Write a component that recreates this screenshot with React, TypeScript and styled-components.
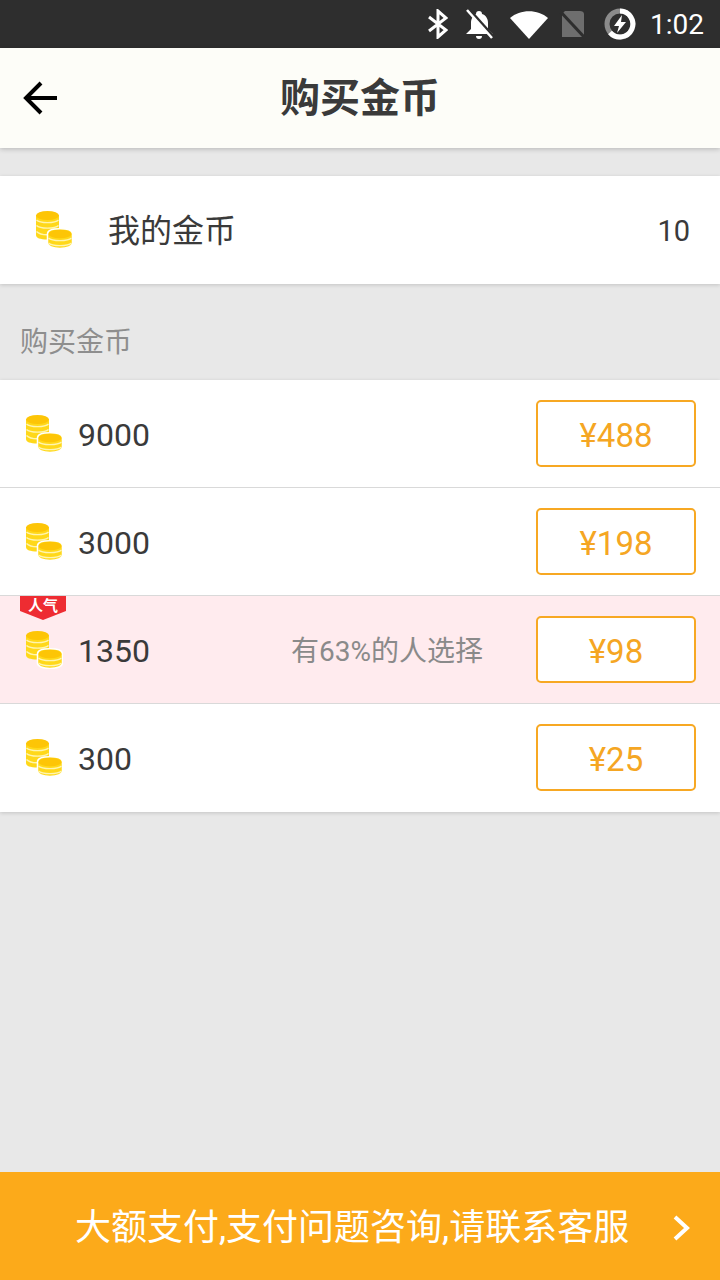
import React from 'react'
import styled, {createGlobalStyle} from 'styled-components'

const GlobalStyle = createGlobalStyle`
  html, body {
    margin: 0;
    padding: 0;
    background: #e8e8e8;
  }
  * {
    box-sizing: border-box;
  }
`

const Page = styled.main`
  width: 720px;
  height: 1280px;
  display: flex;
  flex-direction: column;
  overflow: hidden;
  background: #e8e8e8;
  font-family: Roboto, "Noto Sans CJK SC", sans-serif;
  color: #3a3a3a;
`

const StatusBar = styled.div`
  height: 48px;
  flex: none;
  background: #2e2e2e;
  color: #fff;
  display: flex;
  align-items: center;
  justify-content: flex-end;
  padding-right: 16px;
  font-size: 28px;
`

const StatusIcon = styled.svg<{$gap: number}>`
  display: block;
  margin-right: ${p => p.$gap}px;
`

const Header = styled.header`
  height: 100px;
  flex: none;
  background: #fdfdf8;
  box-shadow: 0 1px 5px rgba(0, 0, 0, 0.22);
  display: flex;
  align-items: center;
  justify-content: center;
  padding-bottom: 6px;
  position: relative;
`

const BackIcon = styled.svg`
  position: absolute;
  left: 23px;
  top: 33px;
`

const Title = styled.h1`
  margin: 0;
  font-size: 40px;
  font-weight: 700;
  color: #3a3a3a;
`

const Balance = styled.section`
  height: 108px;
  flex: none;
  margin-top: 28px;
  background: #fff;
  box-shadow: 0 1px 4px rgba(0, 0, 0, 0.16);
  display: flex;
  align-items: center;
  padding: 0 30px 0 35px;
`

const BalanceLabel = styled.span`
  font-size: 32px;
  margin-left: 35px;
  padding-bottom: 4px;
  flex: 1;
`

const BalanceValue = styled.span`
  font-size: 29px;
  padding-top: 2px;
`

const SectionLabel = styled.div`
  height: 96px;
  flex: none;
  display: flex;
  align-items: center;
  padding: 15px 0 0 20px;
  font-size: 28px;
  color: #8e8e8e;
`

const List = styled.section`
  flex: none;
  background: #fff;
  box-shadow: 0 1px 4px rgba(0, 0, 0, 0.16);
`

const Row = styled.div<{$hot?: boolean}>`
  height: 108px;
  display: flex;
  align-items: center;
  padding: 0 24px 0 25px;
  position: relative;
  background: ${p => (p.$hot ? '#ffebee' : '#fff')};
  border-bottom: 1px solid #d9d9d9;

  &:last-child {
    border-bottom-color: transparent;
  }
`

const Amount = styled.span`
  font-size: 32px;
  margin-left: 15px;
  padding-top: 2px;
  flex: 1;
  color: #3a3a3a;
`

const Note = styled.span`
  font-size: 28px;
  color: #8a8a8a;
  margin-right: 53px;
  padding-bottom: 2px;
`

const PriceButton = styled.button`
  width: 160px;
  height: 67px;
  border: 2px solid #f7a823;
  border-radius: 5px;
  background: #fff;
  color: #f5a623;
  font-family: inherit;
  font-size: 33px;
  padding: 4px 0 0;
`

const Badge = styled.div`
  position: absolute;
  left: 20px;
  top: 0;
  width: 46px;
  height: 24px;
  background: #ee2c32;
  clip-path: polygon(0 0, 100% 0, 100% 62%, 50% 100%, 0 62%);
  color: #fff;
  font-size: 15px;
  font-weight: 700;
  line-height: 21px;
  text-align: center;
`

const Spacer = styled.div`
  flex: 1;
`

const Footer = styled.footer`
  height: 108px;
  flex: none;
  background: #fcaa1a;
  color: #fff;
  display: flex;
  align-items: center;
  padding: 0 0 4px 75px;
  position: relative;
  font-size: 36px;
`

const Chevron = styled.svg`
  position: absolute;
  left: 672px;
  top: 42px;
`

const Coins = () => (
  <svg width="38" height="38" viewBox="0 0 38 38">
    <path fill="#ffd81a" d="M1 4 H24 V24 C24 27 20 28.500 12.500 28.500 C5 28.500 1 27 1 24 Z" />
    <ellipse cx="12.500" cy="4.500" rx="11.500" ry="4.500" fill="#fdc506" />
    <g fill="none" stroke="#fff5b0" strokeWidth="1.400">
      <path d="M1.500 9 C5 12.500 20 12.500 23.500 9" />
      <path d="M1.500 14.500 C5 18 20 18 23.500 14.500" />
      <path d="M1.500 20.500 C4 23 8 23.800 12 23.800" />
    </g>
    <path fill="#ffd81a" stroke="#fff" strokeWidth="1.500" d="M12.500 23 C12.500 19.500 18 17.800 25 17.800 C32 17.800 37.500 19.500 37.500 23 V32 C37.500 35.500 32 37.500 25 37.500 C18 37.500 12.500 35.500 12.500 32 Z" />
    <ellipse cx="25" cy="23" rx="11.500" ry="4.300" fill="#fdc506" />
    <g fill="none" stroke="#fff5b0" strokeWidth="1.400">
      <path d="M13.500 27 C17 30.500 33 30.500 36.500 27" />
      <path d="M13.500 32 C17 35.500 33 35.500 36.500 32" />
    </g>
  </svg>
)

const packages = [
  {amount: '9000', price: '¥488'},
  {amount: '3000', price: '¥198'},
  {amount: '1350', price: '¥98', hot: true, note: '有63%的人选择'},
  {amount: '300', price: '¥25'},
]

export default function App() {
  return (
    <Page>
      <GlobalStyle />
      <StatusBar>
        <StatusIcon $gap={16} width="22" height="30" viewBox="0 0 22 30" fill="none" stroke="#fff" strokeWidth="3">
          <path d="M3 8 L20 21 L12 28 V2 L20 9 L3 22" />
        </StatusIcon>
        <StatusIcon $gap={14} width="30" height="30" viewBox="0 0 30 30">
          <path fill="#fff" d="M15 2 C17 2 18 3 18 5 C22 6 24 10 24 14 V20 L29 25 H2 L7 20 V14 C7 10 9 6 12 5 C12 3 13 2 15 2 Z M12 27 H18 C18 29 17 30 15 30 C13 30 12 29 12 27 Z" />
          <path stroke="#2e2e2e" strokeWidth="4" d="M4 0 L29 28" />
          <path stroke="#fff" strokeWidth="2.500" d="M3 1 L28 29" />
        </StatusIcon>
        <StatusIcon $gap={11} width="40" height="30" viewBox="0 0 40 30">
          <path fill="#fff" d="M2 9 C12 0 30 0 40 9 L21 30 Z" />
        </StatusIcon>
        <StatusIcon $gap={19} width="26" height="30" viewBox="0 0 26 30">
          <path fill="#6e6e6e" d="M6 2 H21 C23 2 25 3 25 5 V28 H3 V5 Z" />
          <path stroke="#2e2e2e" strokeWidth="3" d="M0 1 L26 29" />
        </StatusIcon>
        <StatusIcon $gap={14} width="32" height="32" viewBox="0 0 32 32">
          <circle cx="16" cy="16" r="13" fill="none" stroke="#8b8b8b" strokeWidth="5" />
          <path d="M16 3 A13 13 0 1 1 6 24.500" fill="none" stroke="#fff" strokeWidth="5" />
          <path fill="#fff" d="M18 7 L10 18 H15 L13 25 L22 14 H17 Z" />
        </StatusIcon>
        <span>1:02</span>
      </StatusBar>

      <Header>
        <BackIcon width="36" height="34" viewBox="0 0 36 34" fill="none" stroke="#000" strokeWidth="4">
          <path d="M34 17 H4" />
          <path d="M18 2 L3 17 L18 32" />
        </BackIcon>
        <Title>购买金币</Title>
      </Header>

      <Balance>
        <Coins />
        <BalanceLabel>我的金币</BalanceLabel>
        <BalanceValue>10</BalanceValue>
      </Balance>

      <SectionLabel>购买金币</SectionLabel>

      <List>
        {packages.map(item => (
          <Row key={item.amount} $hot={item.hot}>
            {item.hot && <Badge>人气</Badge>}
            <Coins />
            <Amount>{item.amount}</Amount>
            {item.note && <Note>{item.note}</Note>}
            <PriceButton>{item.price}</PriceButton>
          </Row>
        ))}
      </List>

      <Spacer />

      <Footer>
        大额支付,支付问题咨询,请联系客服
        <Chevron width="20" height="28" viewBox="0 0 20 28" fill="none" stroke="#fff" strokeWidth="4">
          <path d="M3 3 L15 14 L3 25" />
        </Chevron>
      </Footer>
    </Page>
  )
}
